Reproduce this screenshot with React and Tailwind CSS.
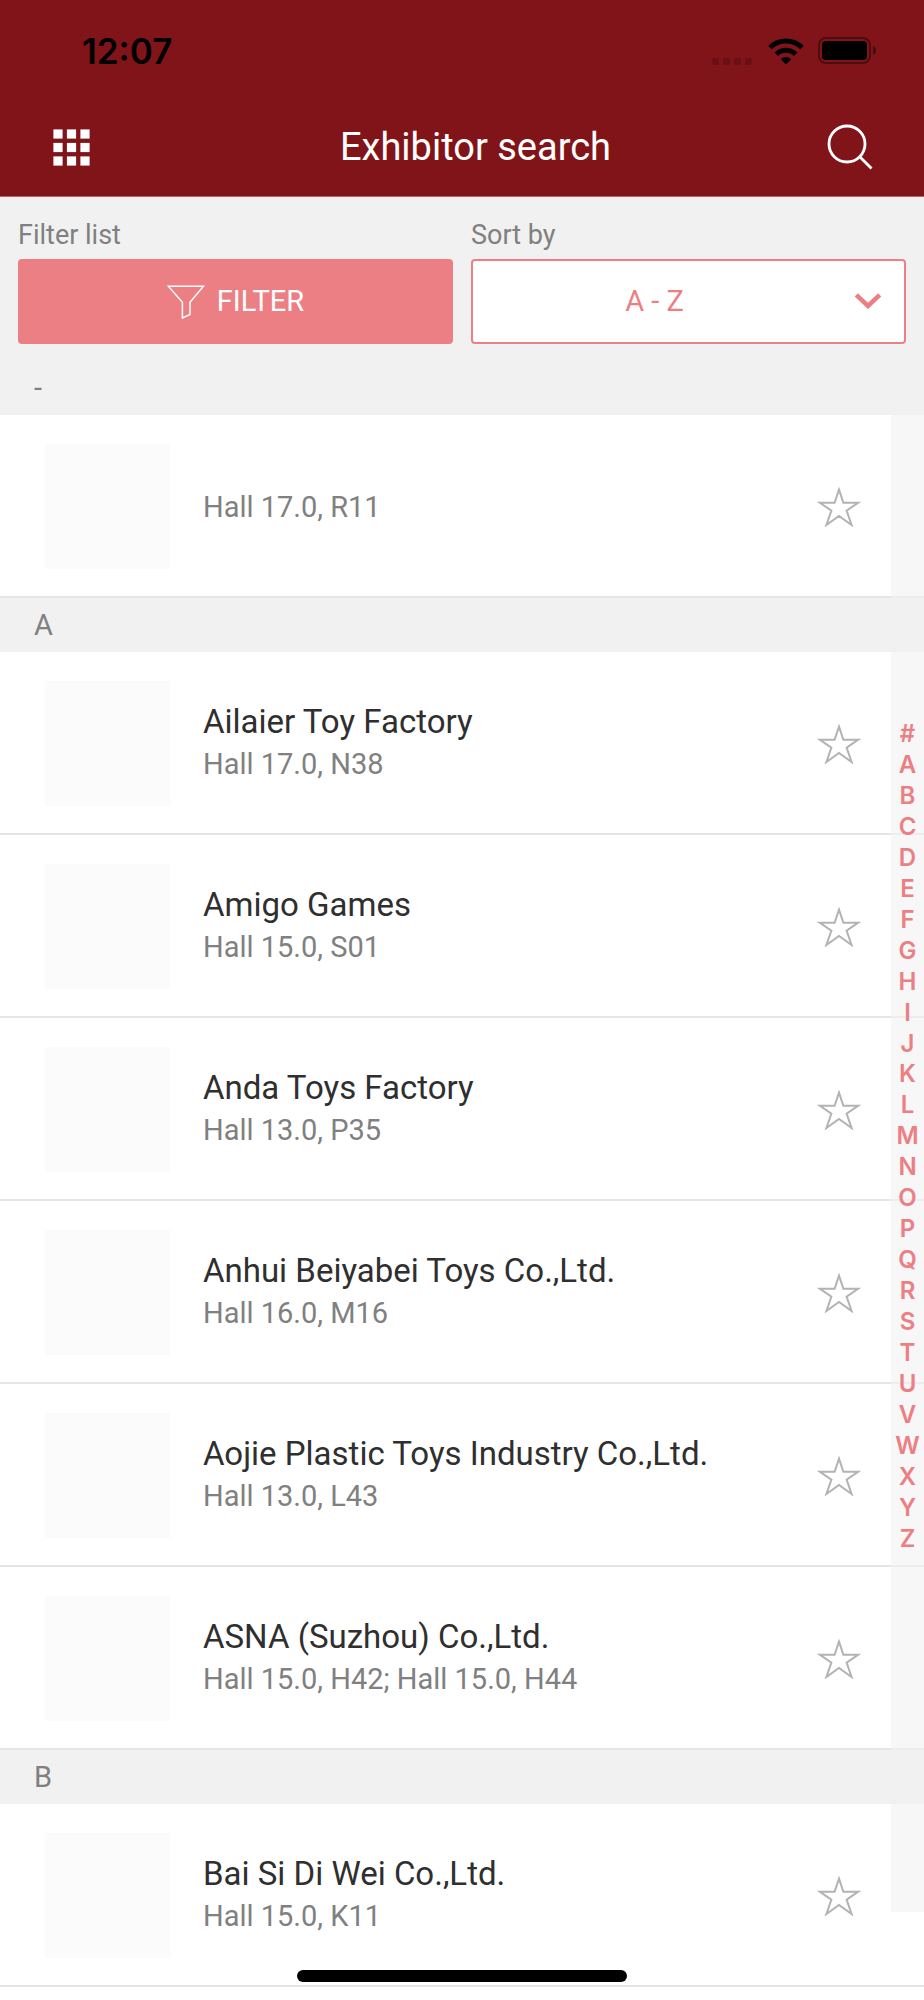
const sections = [
  {
    letter: '-',
    exhibitors: [{ id: 1, name: '', hall: 'Hall 17.0, R11' }],
  },
  {
    letter: 'A',
    exhibitors: [
      { id: 2, name: 'Ailaier Toy Factory', hall: 'Hall 17.0, N38' },
      { id: 3, name: 'Amigo Games', hall: 'Hall 15.0, S01' },
      { id: 4, name: 'Anda Toys Factory', hall: 'Hall 13.0, P35' },
      { id: 5, name: 'Anhui Beiyabei Toys Co.,Ltd.', hall: 'Hall 16.0, M16' },
      { id: 6, name: 'Aojie Plastic Toys Industry Co.,Ltd.', hall: 'Hall 13.0, L43' },
      { id: 7, name: 'ASNA (Suzhou) Co.,Ltd.', hall: 'Hall 15.0, H42; Hall 15.0, H44' },
    ],
  },
  {
    letter: 'B',
    exhibitors: [{ id: 8, name: 'Bai Si Di Wei Co.,Ltd.', hall: 'Hall 15.0, K11' }],
  },
];

const indexLetters = '#ABCDEFGHIJKLMNOPQRSTUVWXYZ'.split('');

function WifiIcon() {
  return (
    <svg className="h-[27px] w-9" viewBox="0 0 36 27" fill="none" stroke="#000" strokeWidth="5" aria-hidden="true">
      <path d="M2 9.6a22.6 22.6 0 0 1 32 0" />
      <path d="M8.3 16.3a13.8 13.8 0 0 1 19.4 0" />
      <path d="M18 26.5l-5.2-5.3a7.4 7.4 0 0 1 10.4 0z" fill="#000" stroke="none" />
    </svg>
  );
}

function BatteryIcon() {
  return (
    <svg className="h-7 w-[58px]" viewBox="0 0 58 28" fill="none" aria-hidden="true">
      <rect x="1" y="1" width="51" height="25" rx="7" stroke="#000" strokeOpacity="0.4" strokeWidth="2" />
      <rect x="4" y="4" width="45" height="19" rx="4" fill="#000" />
      <path d="M55 9c4 1.5 4 7.5 0 9z" fill="#000" fillOpacity="0.45" />
    </svg>
  );
}

function GridIcon() {
  return (
    <svg className="h-[37px] w-[37px]" viewBox="0 0 37 37" fill="#fff" aria-hidden="true">
      {[0, 13.5, 27].map((y) =>
        [0, 13.5, 27].map((x) => <rect key={`${x}-${y}`} x={x + 0.4} y={y + 0.4} width="9.2" height="9.2" />)
      )}
    </svg>
  );
}

function SearchIcon() {
  return (
    <svg className="h-[46px] w-[46px]" viewBox="0 0 46 46" fill="none" stroke="#fff" strokeWidth="2.8" aria-hidden="true">
      <circle cx="20" cy="20" r="18" />
      <path d="M32.5 32.5L44.5 44.5" />
    </svg>
  );
}

function FunnelIcon() {
  return (
    <svg className="h-[34px] w-[38px]" viewBox="0 0 38 34" fill="none" stroke="#fff" strokeWidth="1.5" aria-hidden="true">
      <path d="M1.3 1.2H36.5L23 17.2V29.5L15.4 33V17.2z" />
    </svg>
  );
}

function StarIcon() {
  return (
    <svg className="h-10 w-11" viewBox="0 0 44 40" fill="none" stroke="#b3b3b3" strokeWidth="2" aria-hidden="true">
      <path d="M22 2.6L26.4 15.8H41L29.6 23.6L34.6 38L22 29L9.4 38L14.4 23.6L3 15.8H17.6z" />
    </svg>
  );
}

function ExhibitorRow({ exhibitor }) {
  return (
    <li className="flex items-center border-b-2 border-[#e5e5e5] bg-white pt-[29px] pb-[27px] pl-[45px]">
      <div className="h-[125px] w-[125px] shrink-0 bg-[#fbfbfb]"></div>
      <div className="min-w-0 flex-1 pl-[33px]">
        {exhibitor.name && (
          <h3 className="text-[33px] leading-[41px] text-[#2f2f2f]">{exhibitor.name}</h3>
        )}
        <p className="text-[29px] leading-[44px] text-[#808080]">{exhibitor.hall}</p>
      </div>
      <button type="button" aria-label="Add to favourites" className="mr-[63px] shrink-0">
        <StarIcon />
      </button>
    </li>
  );
}

export default function App() {
  return (
    <div className="relative flex min-h-screen flex-col bg-white font-[Roboto,sans-serif]">
      <header className="border-b border-[#b5666c] bg-[#811418]">
        {/* Status bar */}
        <div className="flex h-[98px] items-center justify-between pt-1 pr-12 pl-[82px]">
          <span className="font-[Inter,sans-serif] text-[35px] leading-10 font-semibold text-black">12:07</span>
          <div className="flex items-center">
            <div className="mt-5 mr-4 flex gap-1">
              <span className="h-[7px] w-[7px] rounded-xs bg-[#681013]"></span>
              <span className="h-[7px] w-[7px] rounded-xs bg-[#681013]"></span>
              <span className="h-[7px] w-[7px] rounded-xs bg-[#681013]"></span>
              <span className="h-[7px] w-[7px] rounded-xs bg-[#681013]"></span>
            </div>
            <WifiIcon />
            <div className="ml-[14px]">
              <BatteryIcon />
            </div>
          </div>
        </div>

        {/* Navigation */}
        <div className="flex h-[98px] items-center pr-[51px] pl-[53px]">
          <button type="button" aria-label="Menu">
            <GridIcon />
          </button>
          <h1 className="flex-1 pl-[34px] text-center text-[38px] leading-[48px] text-white">Exhibitor search</h1>
          <button type="button" aria-label="Search">
            <SearchIcon />
          </button>
        </div>
      </header>

      {/* Filter and sort */}
      <div className="grid grid-cols-2 gap-[18px] bg-[#f1f1f1] px-[18px] pt-[21px] pb-[17px]">
        <div>
          <p id="filter-label" className="mb-[7px] text-[27px] leading-[34px] text-[#808080]">Filter list</p>
          <button
            type="button"
            aria-describedby="filter-label"
            className="flex h-[85px] w-full items-center justify-center gap-3 rounded-sm bg-[#ec7f84] text-[29px] text-white"
          >
            <FunnelIcon />
            FILTER
          </button>
        </div>
        <div>
          <label htmlFor="sort" className="mb-[7px] block text-[27px] leading-[34px] text-[#808080]">Sort by</label>
          <div className="relative">
            <select
              id="sort"
              defaultValue="az"
              className="block h-[85px] w-full appearance-none rounded-sm border-2 border-[#ec7f84] bg-white pr-[68px] text-center text-[29px] text-[#ec7f84] [text-align-last:center]"
            >
              <option value="az">A - Z</option>
              <option value="za">Z - A</option>
            </select>
            <svg
              className="pointer-events-none absolute top-[34px] right-6 h-4 w-7"
              viewBox="0 0 28 16"
              fill="none"
              stroke="#ec7f84"
              strokeWidth="4.5"
              aria-hidden="true"
            >
              <path d="M2.3 1.8L14 13L25.7 1.8" />
            </svg>
          </div>
        </div>
      </div>

      <main className="relative flex-1">
        {sections.map((section) => (
          <section key={section.letter}>
            <h2 className="h-[54px] bg-[#f1f1f1] pl-[34px] text-[29px] leading-[54px] text-[#808080]">
              {section.letter}
            </h2>
            <ul>
              {section.exhibitors.map((exhibitor) => (
                <ExhibitorRow key={exhibitor.id} exhibitor={exhibitor} />
              ))}
            </ul>
          </section>
        ))}

        {/* Alphabet index */}
        <nav
          aria-label="Alphabet"
          className="absolute top-0 right-0 bottom-[88px] flex w-[33px] flex-col items-center justify-between bg-[#f1f1f1]/60 py-[358px] font-[Inter,sans-serif] text-2xl font-semibold text-[#ec7f84]"
        >
          {indexLetters.map((letter) => (
            <a key={letter} href={`#${letter}`} className="leading-[30px]">
              {letter}
            </a>
          ))}
        </nav>
      </main>

      {/* Home indicator */}
      <div className="absolute bottom-[18px] left-1/2 h-3 w-[330px] -translate-x-1/2 rounded-full bg-black"></div>
    </div>
  );
}
